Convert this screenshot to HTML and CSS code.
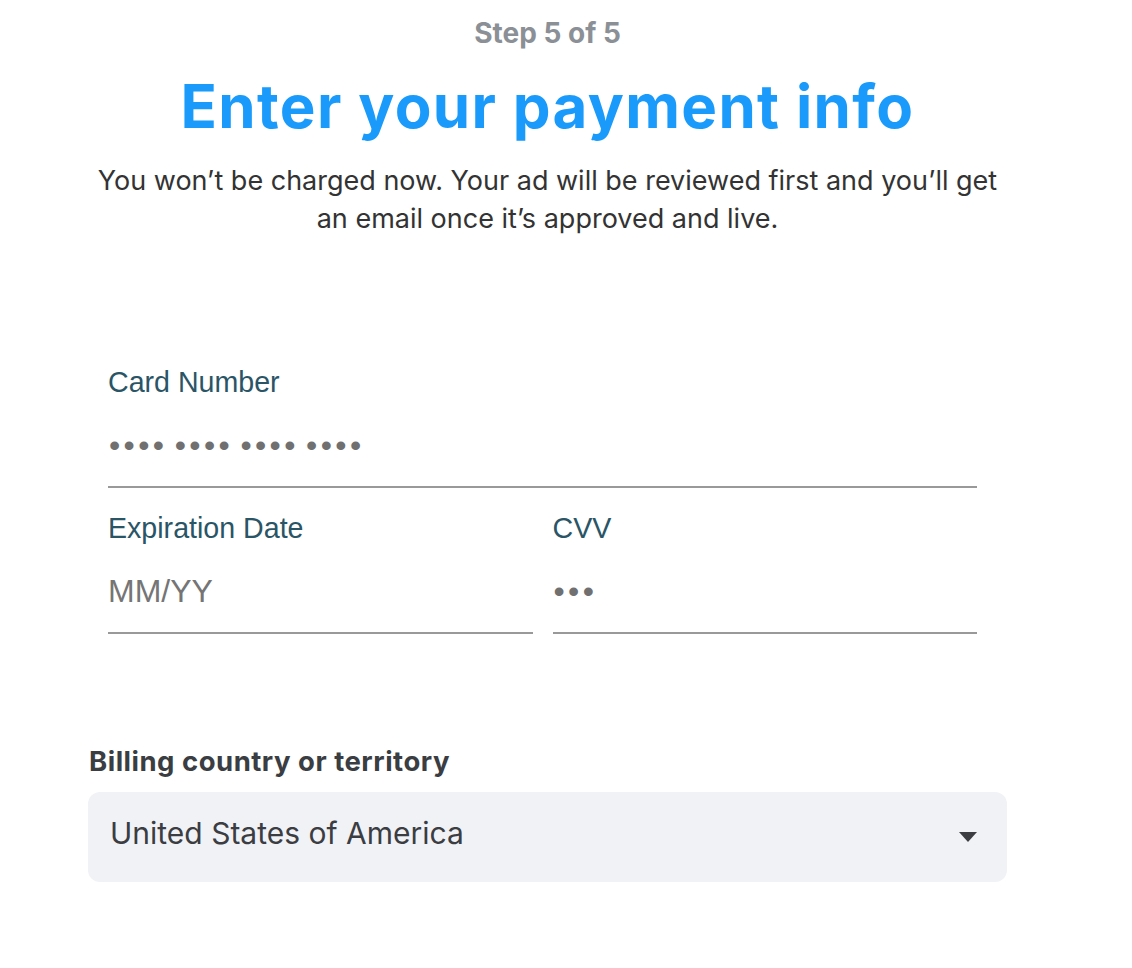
FILE: index.html
```html
<!DOCTYPE html>
<html lang="en">
<head>
<meta charset="utf-8">
<title>Payment info</title>
<link rel="stylesheet" href="styles.css">
</head>
<body>
<main class="page">
  <header class="intro">
    <div class="step">Step 5 of 5</div>
    <h1 class="title">Enter your payment info</h1>
    <p class="lead">You won’t be charged now. Your ad will be reviewed first and you’ll get an email once it’s approved and live.</p>
  </header>

  <section class="card-form">
    <div class="field">
      <div class="field-label">Card Number</div>
      <div class="field-input dots">•••• •••• •••• ••••</div>
    </div>
    <div class="field-row">
      <div class="field">
        <div class="field-label">Expiration Date</div>
        <div class="field-input placeholder">MM/YY</div>
      </div>
      <div class="field">
        <div class="field-label">CVV</div>
        <div class="field-input dots">•••</div>
      </div>
    </div>
  </section>

  <section class="billing">
    <div class="billing-label">Billing country or territory</div>
    <div class="select">
      <span class="select-value">United States of America</span>
      <svg class="caret" width="18" height="10" viewBox="0 0 18 10"><path d="M0 0h18L9 10z" fill="#3b3d42"/></svg>
    </div>
  </section>
</main>
</body>
</html>
```

FILE: styles.css
```css
* { box-sizing: border-box; }
html, body { margin: 0; background: #fff; }
body { font-family: Inter, "Noto Sans", sans-serif; color: #333; }

.page {
  width: 919px;
  margin-left: 88px;
  padding-top: 15px;
}

.intro { text-align: center; }
.step {
  font-size: 28px;
  font-weight: 700;
  color: #8b9096;
  line-height: 36px;
}
.title {
  margin: 23px 0 0;
  font-size: 60px;
  line-height: 64px;
  font-weight: 700;
  color: #1a9bfc;
  letter-spacing: 1.35px;
}
.lead {
  margin: 24px 0 0;
  font-size: 27px;
  line-height: 38px;
  color: #333;
}

.card-form {
  margin-top: 128px;
  padding: 0 30px 0 20px;
  font-family: "Liberation Sans", Arial, sans-serif;
}
.field { flex: 1; }
.field-label {
  font-size: 28.6px;
  line-height: 32px;
  color: #2a5566;
}
.field-input {
  margin-top: 27px;
  padding-bottom: 21px;
  border-bottom: 2px solid #999;
  font-size: 32px;
  line-height: 40px;
  height: 63px;
}
.dots {
  color: #707070;
  letter-spacing: 3.4px;
  word-spacing: -5px;
  padding-left: 1px;
}
.placeholder { color: #757575; }
.field-row {
  display: flex;
  gap: 20px;
  margin-top: 24px;
}

.billing { margin-top: 111px; }
.billing-label {
  font-size: 27.5px;
  font-weight: 700;
  color: #3a3d42;
  line-height: 32px;
  letter-spacing: 0.5px;
  padding-left: 1px;
}
.select {
  margin-top: 15px;
  height: 90px;
  border-radius: 12px;
  background: #f1f2f6;
  display: flex;
  align-items: center;
  justify-content: space-between;
  padding: 0 30px 0 22px;
}
.select-value {
  font-size: 30px;
  color: #3b3d42;
  margin-bottom: 8px;
}
.caret { display: block; }
```
